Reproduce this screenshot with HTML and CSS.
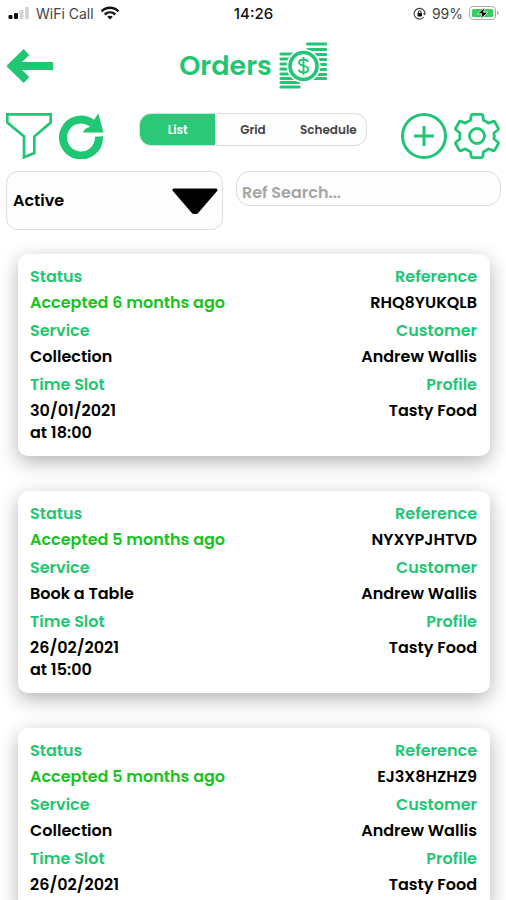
FILE: index.html
```html
<!DOCTYPE html>
<html lang="en">
<head>
<meta charset="utf-8">
<meta name="viewport" content="width=device-width, initial-scale=1">
<title>Orders</title>
<link rel="stylesheet" href="styles.css">
</head>
<body>
<div class="screen">
  <div class="statusbar">
    <div class="status-left">
      <svg width="22" height="12" viewBox="0 0 22 12" aria-hidden="true">
        <rect x="0.5" y="8" width="4" height="4" rx="1" fill="#111"/>
        <rect x="6" y="6" width="4" height="6" rx="1" fill="#111"/>
        <rect x="11.5" y="3" width="4" height="9" rx="1" fill="#d5d5d5"/>
        <rect x="17" y="0" width="4" height="12" rx="1" fill="#d5d5d5"/>
      </svg>
      <span>WiFi Call</span>
      <svg width="20" height="14" viewBox="0 0 20 14" fill="none" stroke="#111" stroke-width="2.4" aria-hidden="true">
        <path d="M1.5 5.3C6.3 0.6 13.7 0.6 18.500 5.300M4.700 8.500C7.800 5.700 12.200 5.700 15.300 8.500"/>
        <path d="M10 13.600L7.200 10.800C8.700 9.500 11.300 9.500 12.800 10.800Z" fill="#111" stroke="none"/>
      </svg>
    </div>
    <span class="clock">14:26</span>
    <div class="status-right">
      <svg width="13" height="13" viewBox="0 0 13 13" fill="none" aria-hidden="true">
        <path d="M10.800 10A5.400 5.400 0 1 1 11.900 6.500" stroke="#444" stroke-width="1.200"/>
        <path d="M9.800 6.200H13L11.600 8.400Z" fill="#444"/>
        <rect x="4.500" y="6" width="4.500" height="3.400" rx="0.600" fill="#111"/>
        <path d="M5.500 6V5a1.200 1.200 0 0 1 2.500 0V6" stroke="#111" stroke-width="0.900"/>
      </svg>
      <span>99%</span>
      <svg width="30" height="14" viewBox="0 0 30 14" aria-hidden="true">
        <rect x="0.500" y="0.500" width="26" height="13" rx="3.500" fill="#fff" stroke="#aaa"/>
        <rect x="3" y="3" width="21" height="8" rx="1.500" fill="#35cf5b"/>
        <path d="M28 5v4c2-.5 2-3.500 0-4z" fill="#aaa"/>
        <path d="M16 1L8.500 7.800H13L11.500 13L19 6.200H14.500Z" fill="#000" stroke="#fff" stroke-width="0.800"/>
      </svg>
    </div>
  </div>

  <header class="header">
    <button class="icon-btn back" aria-label="Back">
      <svg width="46" height="34" viewBox="0 0 46 34" fill="none" stroke="currentColor" aria-hidden="true">
        <path d="M4 17H46" stroke-width="8"/>
        <path d="M19.500 3L5 17L19.500 31" stroke-width="8"/>
      </svg>
    </button>
    <h1 class="title">Orders</h1>
    <svg class="coins" width="48" height="48" viewBox="0 0 48 48" fill="none" aria-hidden="true">
      <path d="M28.500 2H46.500M28.500 7.500H46.500M28.500 12.500H46.500M28.500 17.500H46.500M28.500 22.500H46.500M28.500 27.500H46.500M28.500 32.500H46.500M28.500 36.500H46.500M2 12H20M2 17H20M2 22H20M2 27H20M2 32H20M2 36.500H20M2 40.500H20M2 45H20" stroke="currentColor" stroke-width="3.200" stroke-linecap="round"/>
      <circle cx="24.500" cy="24" r="17" fill="#fff"/>
      <circle cx="24.500" cy="24" r="13.500" stroke="currentColor" stroke-width="3.600"/>
      <path d="M29 20C28.200 17.800 26.500 17.500 24.500 17.500C22 17.500 20 18.500 20 20.600C20 25 29.300 22.600 29.300 27.200C29.300 29.500 27 30.500 24.600 30.500C22 30.500 20.300 29.600 19.600 27.600M24.500 15V33" stroke="currentColor" stroke-width="1.800"/>
    </svg>
  </header>

  <div class="toolbar">
    <div class="tools">
      <button class="icon-btn" aria-label="Filter">
        <svg width="46" height="46" viewBox="0 0 46 46" fill="none" stroke="currentColor" stroke-width="2.700" aria-hidden="true">
          <path d="M1.300 1.300H44.700V9.500L28.300 23.500V40L18 44.300V23.500L1.300 9.500Z"/>
        </svg>
      </button>
      <button class="icon-btn" aria-label="Refresh">
        <svg width="46" height="46" viewBox="0 0 46 46" aria-hidden="true">
          <path d="M40 23.500A18 18 0 1 1 33 10.200" fill="none" stroke="currentColor" stroke-width="8"/>
          <path d="M39.300 0.500L44.500 19.500H24Q25 15.500 30 14.200Z" fill="currentColor"/>
        </svg>
      </button>
    </div>
    <div class="segments" role="tablist" aria-label="View">
      <button class="segment active" role="tab" aria-selected="true">List</button>
      <button class="segment" role="tab" aria-selected="false">Grid</button>
      <button class="segment" role="tab" aria-selected="false">Schedule</button>
    </div>
    <div class="tools">
      <button class="icon-btn" aria-label="Add order">
        <svg width="46" height="46" viewBox="0 0 46 46" fill="none" stroke="currentColor" stroke-width="3" aria-hidden="true">
          <circle cx="23" cy="23" r="21.500"/>
          <path d="M23 13V33M13 23H33"/>
        </svg>
      </button>
      <button class="icon-btn" aria-label="Settings">
        <svg width="46" height="46" viewBox="0 0 46 46" fill="none" stroke="currentColor" stroke-width="2.800" stroke-linejoin="round" aria-hidden="true">
          <path d="M18.500 1.400H27.500Q28.600 1.400 28.800 2.600L29.500 7.300Q32.200 8.400 34.500 10.200L39 8.400Q40.200 8 40.800 9L44.200 15Q44.800 16.200 43.900 17L40 20Q40.500 23 40 26L43.900 29Q44.800 29.800 44.200 31L40.800 37Q40.200 38 39 37.600L34.500 35.800Q32.200 37.600 29.500 38.700L28.800 43.400Q28.600 44.600 27.500 44.600H18.500Q17.400 44.600 17.200 43.400L16.500 38.700Q13.800 37.600 11.500 35.800L7 37.600Q5.800 38 5.200 37L1.800 31Q1.200 29.800 2.100 29L6 26Q5.500 23 6 20L2.100 17Q1.200 16.200 1.800 15L5.200 9Q5.800 8 7 8.400L11.500 10.200Q13.800 8.400 16.500 7.300L17.200 2.600Q17.400 1.400 18.500 1.400Z"/>
          <circle cx="23" cy="23" r="7.500"/>
        </svg>
      </button>
    </div>
  </div>

  <div class="filters">
    <div class="select-wrap">
      <select class="select" aria-label="Order status">
        <option>Active</option>
      </select>
      <svg class="caret" width="46" height="26" viewBox="0 0 46 26" aria-hidden="true">
        <path d="M2 2H44L25 24Q23 25.500 21 24Z" fill="#000" stroke="#000" stroke-width="3" stroke-linejoin="round"/>
      </svg>
    </div>
    <input class="search" type="text" placeholder="Ref Search..." aria-label="Ref Search">
  </div>

  <main class="orders">
    <article class="card">
      <dl class="fields">
        <div><dt>Status</dt><dd class="accepted">Accepted 6 months ago</dd></div>
        <div><dt>Service</dt><dd>Collection</dd></div>
        <div><dt>Time Slot</dt><dd>30/01/2021<br>at 18:00</dd></div>
      </dl>
      <dl class="fields end">
        <div><dt>Reference</dt><dd>RHQ8YUKQLB</dd></div>
        <div><dt>Customer</dt><dd>Andrew Wallis</dd></div>
        <div><dt>Profile</dt><dd>Tasty Food</dd></div>
      </dl>
    </article>
    <article class="card">
      <dl class="fields">
        <div><dt>Status</dt><dd class="accepted">Accepted 5 months ago</dd></div>
        <div><dt>Service</dt><dd>Book a Table</dd></div>
        <div><dt>Time Slot</dt><dd>26/02/2021<br>at 15:00</dd></div>
      </dl>
      <dl class="fields end">
        <div><dt>Reference</dt><dd>NYXYPJHTVD</dd></div>
        <div><dt>Customer</dt><dd>Andrew Wallis</dd></div>
        <div><dt>Profile</dt><dd>Tasty Food</dd></div>
      </dl>
    </article>
    <article class="card">
      <dl class="fields">
        <div><dt>Status</dt><dd class="accepted">Accepted 5 months ago</dd></div>
        <div><dt>Service</dt><dd>Collection</dd></div>
        <div><dt>Time Slot</dt><dd>26/02/2021</dd></div>
      </dl>
      <dl class="fields end">
        <div><dt>Reference</dt><dd>EJ3X8HZHZ9</dd></div>
        <div><dt>Customer</dt><dd>Andrew Wallis</dd></div>
        <div><dt>Profile</dt><dd>Tasty Food</dd></div>
      </dl>
    </article>
  </main>
</div>
</body>
</html>
```
FILE: styles.css
```css
:root {
  --green: #1fc673;
  --border: #dcdcdc;
}

* {
  box-sizing: border-box;
}

body {
  margin: 0;
  background: #fff;
  color: #111;
  font-family: Poppins, Inter, "Liberation Sans", sans-serif;
  font-size: 16px;
  font-weight: 600;
}

button,
input,
select {
  font: inherit;
  color: inherit;
}

svg {
  display: block;
}

.screen {
  display: flex;
  flex-direction: column;
  height: 100vh;
  overflow: hidden;
}

.statusbar {
  display: grid;
  grid-template-columns: 1fr auto 1fr;
  align-items: center;
  height: 26px;
  padding: 0 7px 0 8px;
  font-family: Inter, sans-serif;
  font-size: 14px;
  font-weight: 400;
  color: #444;
}

.status-left,
.status-right {
  display: flex;
  align-items: center;
  gap: 6px;
}

.status-right {
  justify-content: flex-end;
}

.clock {
  font-size: 15px;
  font-weight: 500;
  color: #111;
}

.header {
  display: grid;
  grid-template-columns: 1fr auto auto 1fr;
  align-items: center;
  column-gap: 7px;
  height: 80px;
  padding: 0 7px;
  color: var(--green);
}

.back {
  justify-self: start;
}

.title {
  margin: 0;
  font-size: 27px;
  line-height: 40px;
  font-weight: 600;
}

.icon-btn {
  padding: 0;
  border: 0;
  background: none;
  color: var(--green);
}

.toolbar {
  display: flex;
  justify-content: space-between;
  align-items: flex-start;
  padding: 7px 6px 0;
}

.tools {
  display: flex;
  gap: 7px;
}

.segments {
  display: grid;
  grid-template-columns: repeat(3, 1fr);
  flex: 0 1 228px;
  height: 33px;
  border: 1px solid var(--border);
  border-radius: 12px;
  background: #fdfdfd;
  overflow: hidden;
}

.segment {
  padding: 0;
  border: 0;
  background: none;
  font-size: 12px;
  color: #444;
}

.segment.active {
  background: #2bc878;
  color: #fff;
}

.filters {
  display: grid;
  grid-template-columns: 9fr 11fr;
  align-items: start;
  column-gap: 13px;
  padding: 12px 5px 0 6px;
}

.select-wrap {
  position: relative;
}

.select {
  width: 100%;
  height: 59px;
  padding: 0 60px 0 6px;
  appearance: none;
  border: 1px solid var(--border);
  border-radius: 12px;
  background: #fdfdfd;
  color: #000;
}

.caret {
  position: absolute;
  top: 17px;
  right: 5px;
  pointer-events: none;
}

.search {
  width: 100%;
  height: 35px;
  padding: 8px 5px 0;
  border: 1px solid var(--border);
  border-radius: 14px;
  background: #fdfdfd;
}

.search::placeholder {
  color: #a6a6a6;
  opacity: 1;
}

.orders {
  display: flex;
  flex-direction: column;
  flex: 1;
  gap: 35px;
  min-height: 0;
  padding: 24px 16px 24px 18px;
  overflow-y: auto;
  scrollbar-width: none;
}

.card {
  display: flex;
  flex: none;
  justify-content: space-between;
  padding: 12px 13px 12px 12px;
  border-radius: 10px;
  background: #fff;
  box-shadow: 0 6px 20px rgba(0, 0, 0, 0.3);
}

.fields {
  display: flex;
  flex-direction: column;
  gap: 6px;
  margin: 0;
  line-height: 22px;
}

.end {
  text-align: right;
}

dt {
  margin-bottom: 4px;
  color: var(--green);
}

dd {
  margin: 0;
  color: #000;
}

dd.accepted {
  color: #18c41c;
}
```
